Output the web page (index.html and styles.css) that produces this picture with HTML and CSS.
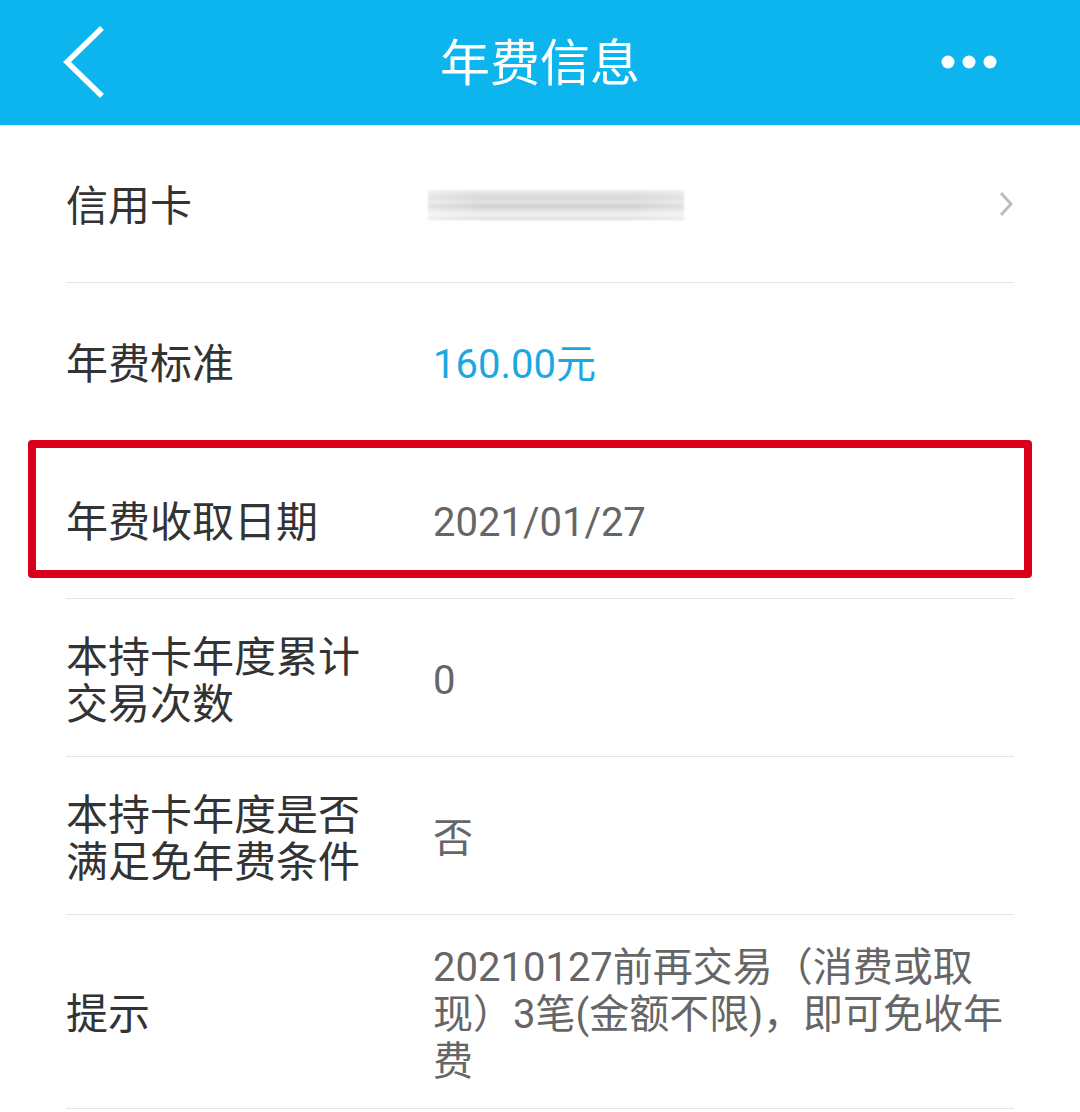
FILE: index.html
```html
<!DOCTYPE html>
<html lang="zh-CN">
<head>
<meta charset="utf-8">
<title>年费信息</title>
<link rel="stylesheet" href="styles.css">
</head>
<body>
<header class="nav">
  <svg class="nav-back" width="44" height="74" viewBox="0 0 44 74"><polyline points="39,3 4,37 39,71" fill="none" stroke="#fff" stroke-width="5.5" stroke-linejoin="miter"/></svg>
  <h1 class="nav-title">年费信息</h1>
  <svg class="nav-more" width="56" height="14" viewBox="0 0 56 14"><circle cx="7" cy="7" r="6.5" fill="#fff"/><circle cx="28" cy="7" r="6.5" fill="#fff"/><circle cx="49" cy="7" r="6.5" fill="#fff"/></svg>
</header>
<main class="list">
  <div class="row">
    <div class="label">信用卡</div>
    <div class="value value-link">
      <div class="masked"></div>
      <svg class="chev" width="16" height="26" viewBox="0 0 16 26"><polyline points="3,2 13,13 3,24" fill="none" stroke="#bdbdbd" stroke-width="3"/></svg>
    </div>
  </div>
  <div class="row">
    <div class="label">年费标准</div>
    <div class="value value-blue">160.00元</div>
  </div>
  <div class="row row-marked">
    <div class="label">年费收取日期</div>
    <div class="value">2021/01/27</div>
    <div class="highlight"></div>
  </div>
  <div class="row">
    <div class="label">本持卡年度累计交易次数</div>
    <div class="value">0</div>
  </div>
  <div class="row">
    <div class="label">本持卡年度是否满足免年费条件</div>
    <div class="value">否</div>
  </div>
  <div class="row">
    <div class="label">提示</div>
    <div class="value">20210127前再交易（消费或取现）3笔(金额不限)，即可免收年费</div>
  </div>
</main>
</body>
</html>
```

FILE: styles.css
```css
* { box-sizing: border-box; }
html, body { margin: 0; padding: 0; background: #fff; }
body {
  font-family: Roboto, "Noto Sans CJK SC", "Noto Sans", sans-serif;
  width: 1080px;
}
.nav {
  height: 125px;
  background: #0db5ef;
  display: flex;
  align-items: center;
  justify-content: space-between;
  padding: 0 83px 0 63px;
  position: relative;
}
.nav-back { display: block; margin-top: -2px; }
.nav-title {
  position: absolute;
  left: 0; right: 0; top: 0;
  margin: 0;
  text-align: center;
  line-height: 128px;
  font-size: 50px;
  font-weight: 400;
  color: #fff;
  pointer-events: none;
}
.nav-more { display: block; margin-top: -2px; }
.list { padding: 0; }
.row {
  position: relative;
  display: flex;
  align-items: center;
  margin: 0 66px;
  min-height: 158px;
  padding: 29px 0 23px;
  border-bottom: 1px solid #e6e6e6;
}
.label {
  flex: 0 0 367px;
  padding-right: 57px;
  font-size: 42px;
  line-height: 47px;
  color: #333;
}
.value {
  flex: 1;
  padding-right: 9px;
  font-size: 40px;
  line-height: 47px;
  color: #666;
}
.value-blue { color: #1ba8e2; }
.value-link {
  display: flex;
  align-items: center;
  justify-content: space-between;
  padding-right: 0;
}
.masked {
  width: 256px;
  height: 30px;
  margin-left: -5px;
  margin-top: -3px;
  background:
    linear-gradient(90deg, rgba(255,255,255,0.35) 0%, rgba(255,255,255,0) 20%, rgba(255,255,255,0) 80%, rgba(255,255,255,0.3) 100%),
    linear-gradient(180deg, #ececec 0%, #d6d6d6 25%, #e4e4e4 40%, #cfcfcf 55%, #ebebeb 72%, #f1f1f1 85%, #d9d9d9 100%);
  filter: blur(1px);
}
.chev { display: block; margin-top: -6px; }
.highlight {
  position: absolute;
  left: -38px;
  top: -1px;
  width: 1004px;
  height: 138px;
  border: 8px solid #d8001b;
  border-radius: 4px;
  pointer-events: none;
}
```
